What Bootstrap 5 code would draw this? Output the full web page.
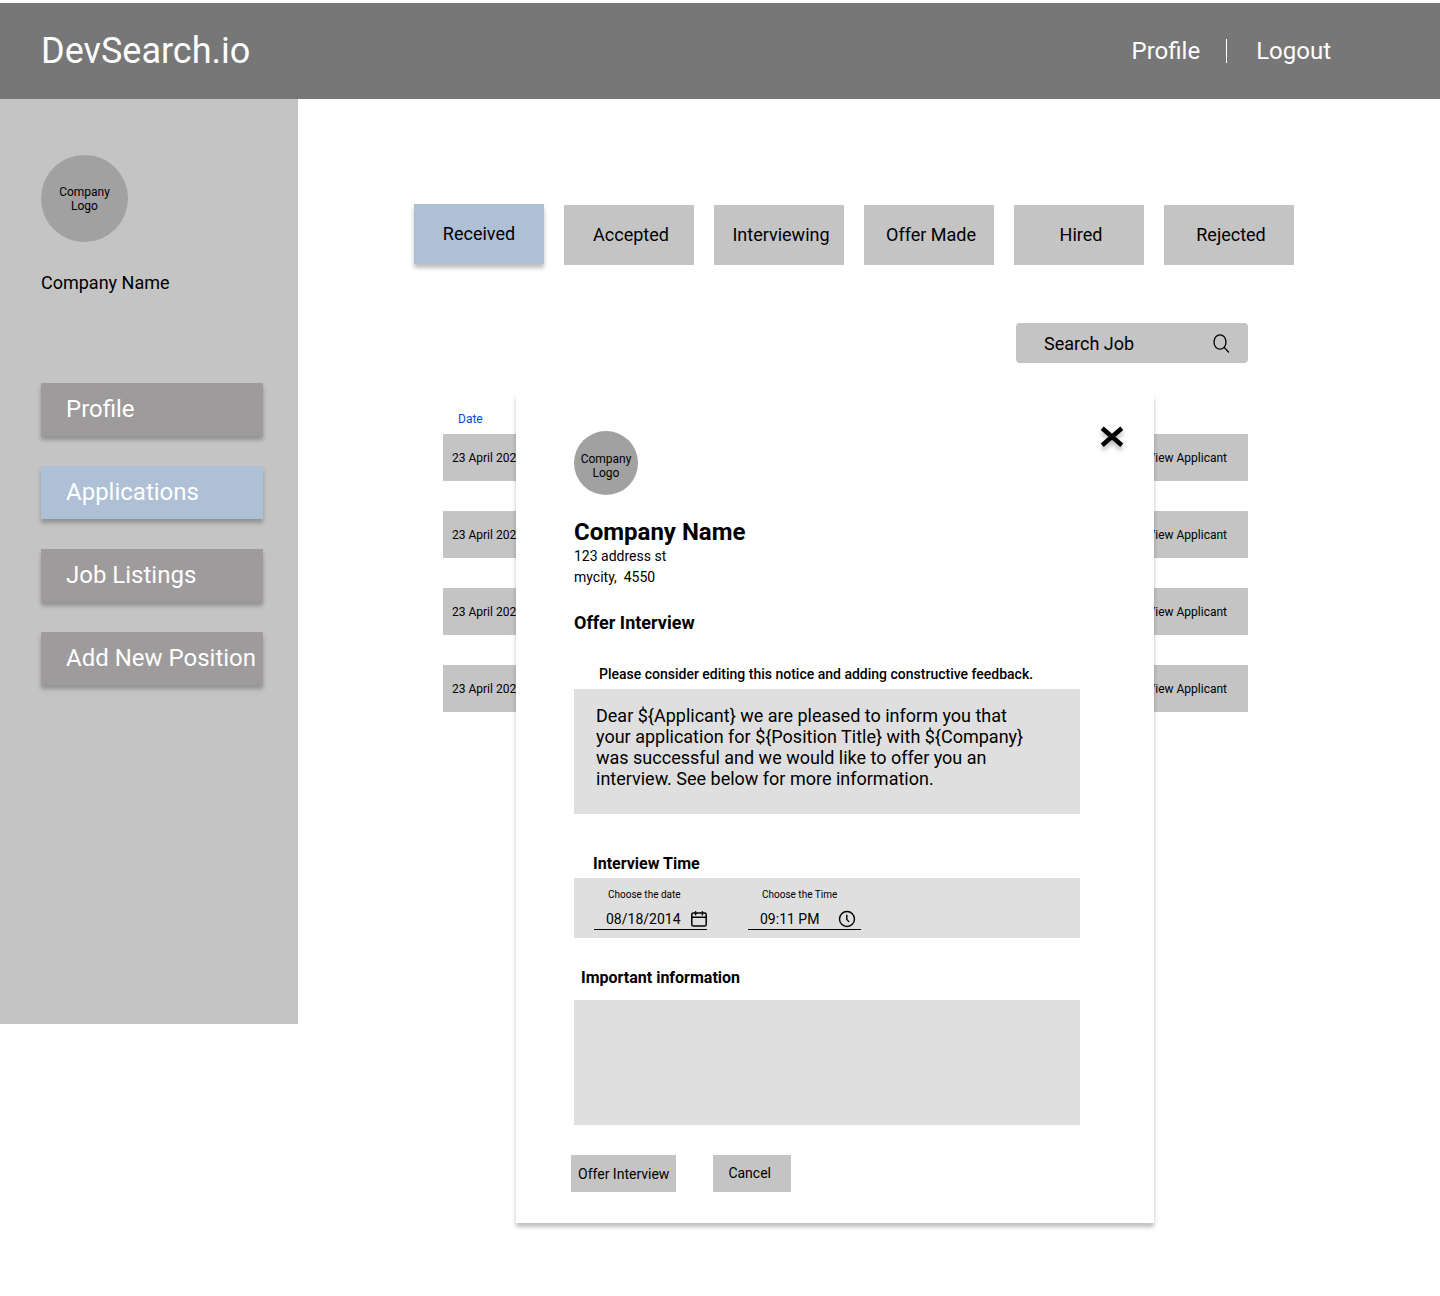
<!DOCTYPE html>
<html lang="en">
<head>
<meta charset="utf-8">
<meta name="viewport" content="width=device-width, initial-scale=1">
<title>DevSearch.io – Applications</title>
<link href="https://cdn.jsdelivr.net/npm/bootstrap@5.3.0/dist/css/bootstrap.min.css" rel="stylesheet">
<style>
  body { font-family: Roboto, "Liberation Sans", sans-serif; color: #000; background: #fff; }
  .site-header { background: #777; min-height: 96px; margin-top: 3px; padding: 0 109px 0 41px; }
  .site-name { font-size: 36px; line-height: 42px; }
  .site-links { font-size: 24px; line-height: 28px; }
  .site-divider { width: 1px; height: 24px; background: #fff; margin: 0 29px 0 26px; }
  .side-panel { width: 298px; min-height: 925px; background: #c4c4c4; padding: 56px 35px 56px 41px; }
  .logo-disc { background: #a1a1a1; font-size: 12px; line-height: 14px; }
  .logo-lg { width: 87px; height: 87px; }
  .logo-sm { width: 64px; height: 64px; padding-top: 6px; }
  .side-company { font-size: 18px; line-height: 22px; margin: 30px 0 89px; }
  .side-links { gap: 30px; }
  .raised { box-shadow: 0 4px 4px rgba(0, 0, 0, .25); }
  .side-item { background: #9d9b9b; height: 53px; padding: 0 0 2px 25px; font-size: 24px; line-height: 28px; }
  .picked { background: #adc0d6 !important; }
  .main-area { padding: 106px 146px 69px 116px; }
  .tab-row { grid-template-columns: repeat(6, minmax(0, 1fr)); gap: 20px; }
  .tab-btn { background: #c4c4c4; height: 60px; padding: 0 0 2px 4px; border: 0; font-size: 18px; line-height: 21px; }
  .tab-btn.picked { padding: 0 0 2px; transform: translateY(-1px); }
  .list-area { margin: 58px 46px 0 29px; }
  .search-box { width: 232px; height: 40px; background: #c4c4c4; border-radius: 4px; padding: 0 18px 0 28px; }
  .search-box input { font-size: 18px; line-height: 21px; min-width: 0; }
  .search-box input::placeholder { color: #000; opacity: 1; }
  .plain { border: 0; background: none; padding: 0; color: #000; outline-offset: 2px; }
  .overlay-stack > * { grid-area: 1 / 1; }
  .job-table { margin-top: 49px; font-size: 12px; line-height: 14px; border-spacing: 0; border-collapse: separate; align-self: start; }
  .job-table th { color: #0050d0; font-weight: 400; padding: 0 0 8px 15px; }
  .job-table td { height: 77px; padding: 0 21px 0 9px; background: #c4c4c4; border-bottom: 30px solid #fff; }
  .offer-dialog { margin: 32px 94px 0 73px; z-index: 2; background: #fff; padding: 36px 74px 31px 55px; }
  .offer-main { padding-left: 3px; }
  .offer-company { font-size: 24px; line-height: 28px; margin: 23px 0 0; font-weight: 700; }
  .offer-address { font-size: 14px; line-height: 21px; margin: 0 0 24px; }
  .offer-title { font-size: 18px; line-height: 22px; font-weight: 700; margin: 0 0 32px; }
  .note-label { font-size: 14px; line-height: 16px; font-weight: 500; margin: 0 0 7px 25px; }
  .note-field { width: 100%; height: 125px; background: #dfdfdf; border: 0; border-radius: 0; resize: none; overflow: hidden; padding: 16px 44px 16px 22px; font-size: 18px; line-height: 21px; color: #000; }
  .block-label { font-size: 16px; line-height: 20px; font-weight: 700; }
  .time-label { margin: 40px 0 4px 19px; }
  .info-label { margin: 30px 0 12px 7px; }
  .time-panel { background: #dfdfdf; height: 60px; padding: 11px 20px 8px; gap: 41px; }
  .time-part { width: 113px; }
  .time-part label { font-size: 10px; line-height: 12px; padding-left: 14px; }
  .time-line { height: 29px; border-bottom: 1px solid #000; padding: 7px 0 0 12px; }
  .time-line input { font-size: 14px; line-height: 20px; width: 80px; min-width: 0; }
  .time-end { padding-right: 5px; }
  .offer-actions { gap: 37px; margin-top: 30px; }
  .act-btn { background: #c4c4c4; border: 0; height: 37px; font-size: 14px; line-height: 16px; padding: 0 7px; }
  .act-cancel { padding: 0 20px 2px 15px; }
  .close-btn { right: 29px; top: 30px; }
  .close-btn svg { filter: drop-shadow(0 4px 2px rgba(0, 0, 0, .25)); }
</style>
<script src="https://cdn.jsdelivr.net/npm/bootstrap@5.3.0/dist/js/bootstrap.bundle.min.js"></script>
</head>
<body>
<header class="site-header d-flex align-items-center justify-content-between text-white">
  <a class="site-name text-white text-decoration-none" href="#">DevSearch.io</a>
  <nav class="site-links d-flex align-items-center">
    <a class="text-white text-decoration-none" href="#">Profile</a>
    <span class="site-divider"></span>
    <a class="text-white text-decoration-none" href="#">Logout</a>
  </nav>
</header>
<div class="d-flex align-items-start">
  <aside class="side-panel flex-shrink-0">
    <div class="logo-disc logo-lg rounded-circle d-flex align-items-center justify-content-center text-center">Company<br>Logo</div>
    <p class="side-company">Company Name</p>
    <nav class="side-links d-flex flex-column">
      <a class="side-item raised d-flex align-items-center text-white text-decoration-none text-nowrap" href="#">Profile</a>
      <a class="side-item raised picked d-flex align-items-center text-white text-decoration-none text-nowrap" href="#">Applications</a>
      <a class="side-item raised d-flex align-items-center text-white text-decoration-none text-nowrap" href="#">Job Listings</a>
      <a class="side-item raised d-flex align-items-center text-white text-decoration-none text-nowrap" href="#">Add New Position</a>
    </nav>
  </aside>
  <main class="main-area flex-grow-1">
    <div class="tab-row d-grid">
      <button type="button" class="tab-btn raised picked">Received</button>
      <button type="button" class="tab-btn">Accepted</button>
      <button type="button" class="tab-btn">Interviewing</button>
      <button type="button" class="tab-btn">Offer Made</button>
      <button type="button" class="tab-btn">Hired</button>
      <button type="button" class="tab-btn">Rejected</button>
    </div>
    <div class="list-area">
      <form class="search-box d-flex align-items-center ms-auto">
        <input class="plain flex-grow-1" type="text" placeholder="Search Job" aria-label="Search Job">
        <button type="button" class="plain d-flex" aria-label="Search">
          <svg width="17" height="20" viewBox="0 0 17 20" fill="none" stroke="#000" stroke-width="1.3" stroke-linecap="round"><ellipse cx="7" cy="9" rx="6" ry="7.2"/><path d="M11.2 14.4 15.5 19"/></svg>
        </button>
      </form>
      <div class="overlay-stack d-grid">
        <table class="job-table w-100">
          <thead><tr><th scope="col" colspan="2">Date</th></tr></thead>
          <tbody>
            <tr><td>23 April 2021</td><td class="text-end"><a class="text-black text-decoration-none" href="#">View Applicant</a></td></tr>
            <tr><td>23 April 2021</td><td class="text-end"><a class="text-black text-decoration-none" href="#">View Applicant</a></td></tr>
            <tr><td>23 April 2021</td><td class="text-end"><a class="text-black text-decoration-none" href="#">View Applicant</a></td></tr>
            <tr><td>23 April 2021</td><td class="text-end"><a class="text-black text-decoration-none" href="#">View Applicant</a></td></tr>
          </tbody>
        </table>
        <section class="offer-dialog raised position-relative" role="dialog" aria-labelledby="offerTitle">
          <button type="button" class="plain close-btn position-absolute d-flex" aria-label="Close">
            <svg width="26" height="24" viewBox="0 0 26 24" fill="none" stroke="#000" stroke-width="4.6"><path d="M3.2 3.2 22.8 20.2M22.8 3.2 3.2 20.2"/></svg>
          </button>
          <form>
            <div class="offer-main">
              <div class="logo-disc logo-sm rounded-circle d-flex align-items-center justify-content-center text-center">Company<br>Logo</div>
              <h1 class="offer-company">Company Name</h1>
              <p class="offer-address">123 address st<br>mycity,&nbsp; 4550</p>
              <h2 class="offer-title" id="offerTitle">Offer Interview</h2>
              <label class="note-label d-block" for="notice">Please consider editing this notice and adding constructive feedback.</label>
              <textarea class="note-field d-block" id="notice" spellcheck="false">Dear ${Applicant} we are pleased to inform you that your application for ${Position Title} with ${Company} was successful and we would like to offer you an interview. See below for more information.</textarea>
              <div class="block-label time-label">Interview Time</div>
              <div class="time-panel d-flex">
                <div class="time-part">
                  <label class="d-block" for="day">Choose the date</label>
                  <div class="time-line d-flex align-items-center justify-content-between">
                    <input class="plain" type="text" id="day" value="08/18/2014">
                    <svg class="flex-shrink-0" width="16" height="16" viewBox="0 0 16 16" fill="none" stroke="#000" stroke-width="1.5" stroke-linecap="round" stroke-linejoin="round"><rect x=".8" y="2" width="14.4" height="13" rx="1.6"/><path d="M.8 6.2h14.4M4.6.8v3M11.4.8v3"/></svg>
                  </div>
                </div>
                <div class="time-part">
                  <label class="d-block" for="hour">Choose the Time</label>
                  <div class="time-line time-end d-flex align-items-center justify-content-between">
                    <input class="plain" type="text" id="hour" value="09:11 PM">
                    <svg class="flex-shrink-0" width="18" height="18" viewBox="0 0 18 18" fill="none" stroke="#000" stroke-width="1.4" stroke-linecap="round" stroke-linejoin="round"><circle cx="9" cy="9" r="7.5"/><path d="M8.8 5.2v4.2l2 2.2"/></svg>
                  </div>
                </div>
              </div>
              <label class="block-label info-label d-block" for="info">Important information</label>
              <textarea class="note-field d-block" id="info"></textarea>
            </div>
            <div class="offer-actions d-flex">
              <button type="button" class="act-btn">Offer Interview</button>
              <button type="button" class="act-btn act-cancel">Cancel</button>
            </div>
          </form>
        </section>
      </div>
    </div>
  </main>
</div>
</body>
</html>
